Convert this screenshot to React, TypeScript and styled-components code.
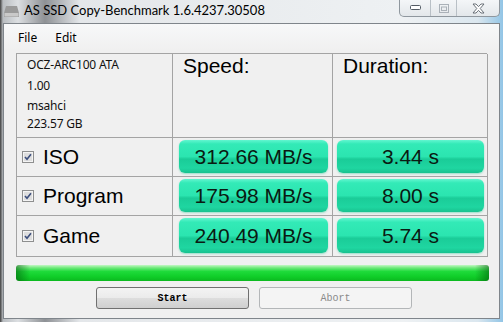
import React from "react";
import styled, { createGlobalStyle } from "styled-components";

const GlobalStyle = createGlobalStyle`
  html, body {
    margin: 0;
    padding: 0;
    width: 503px;
    height: 322px;
    overflow: hidden;
    background: #9cc8e6;
  }
`;

const Window = styled.div`
  width: 503px;
  height: 322px;
  display: flex;
  flex-direction: column;
  background: linear-gradient(90deg, #3e3e3e 0, #b9bdc1 3px, #dcdfe2 18px, #8e9195 45px, #e4e7ea 80px, #eef1f3 80%, #dbe7ef 95%, #92c5e6 100%);
  font-family: "Liberation Sans", Arial, sans-serif;
`;

const TitleBar = styled.div`
  height: 23px;
  display: flex;
  align-items: flex-start;
  flex-shrink: 0;
`;

const AppIcon = styled.svg`
  margin: 5px 0 0 4px;
`;

const TitleText = styled.div`
  margin: 1px 0 0 5px;
  font-family: Lato, "Noto Sans", sans-serif;
  font-size: 13px;
  line-height: 18px;
  color: #000;
`;

const Controls = styled.div`
  margin-left: auto;
  margin-right: 3px;
  display: flex;
  height: 16px;
  border: 1px solid #8f979e;
  border-top: none;
  border-radius: 0 0 5px 5px;
  background: linear-gradient(#f4f6f8, #e3e7ea);
  overflow: hidden;
`;

const CtrlButton = styled.div<{ $w: number; $last?: boolean }>`
  width: ${(p) => p.$w}px;
  display: flex;
  align-items: center;
  justify-content: center;
  border-right: ${(p) => (p.$last ? "none" : "1px solid #b9c0c6")};
`;

const Client = styled.div`
  flex: 1;
  margin: 0 3px 3px 3px;
  border: 1px solid #7f858b;
  background: #f0f0f0;
  display: flex;
  flex-direction: column;
`;

const MenuBar = styled.div`
  height: 26px;
  display: flex;
  align-items: center;
  padding-left: 5px;
  background: linear-gradient(#f7f8f9, #f0f0f0);
`;

const MenuItem = styled.span`
  padding: 0 9px;
  font-family: "Noto Sans", "Open Sans", sans-serif;
  font-size: 12px;
  color: #000;
`;

const Table = styled.div`
  margin: 3px 0 0 12px;
  width: 471px;
  display: grid;
  grid-template-columns: 156px 160px 155px;
  grid-template-rows: 84px 39px 39px 41px;
  border-top: 1px solid #a4a4a4;
  border-left: 1px solid #a4a4a4;
  box-sizing: border-box;
`;

const Cell = styled.div`
  border-right: 1px solid #a4a4a4;
  border-bottom: 1px solid #a4a4a4;
  box-sizing: border-box;
  display: flex;
  min-width: 0;
`;

const InfoCell = styled(Cell)`
  flex-direction: column;
  padding: 0 0 0 10px;
  font-family: "Noto Sans", "Open Sans", sans-serif;
  font-size: 12px;
  letter-spacing: -0.2px;
  color: #111;
`;

const InfoLine = styled.div<{ $h: number }>`
  height: ${(p) => p.$h}px;
  line-height: ${(p) => p.$h}px;
`;

const HeadCell = styled(Cell)`
  padding: 0 0 0 10px;
  font-size: 21px;
  line-height: 24px;
  color: #000;
`;

const LabelCell = styled(Cell)`
  align-items: center;
  padding-left: 5px;
  gap: 9px;
  font-size: 21px;
  color: #000;
`;

const BarCell = styled(Cell)<{ $pl: number; $pr: number }>`
  padding: 2px ${(p) => p.$pr}px 3px ${(p) => p.$pl}px;
`;

const ResultBar = styled.div`
  flex: 1;
  border-radius: 6px;
  display: flex;
  align-items: center;
  justify-content: center;
  font-size: 21px;
  color: #0a1a12;
  background: linear-gradient(#62f6d0 0%, #33eab7 12%, #2be5b0 50%, #1acc98 58%, #1fd6a1 85%, #18c28f 100%);
  box-shadow: 0 1px 2px rgba(40, 200, 150, 0.45);
`;

const Progress = styled.div`
  margin: 8px 0 0 12px;
  width: 473px;
  height: 16px;
  border-radius: 3px;
  background:
    linear-gradient(90deg, rgba(0, 90, 10, 0.55) 0, rgba(0, 90, 10, 0) 14px, rgba(0, 90, 10, 0) calc(100% - 14px), rgba(0, 90, 10, 0.55) 100%),
    linear-gradient(#c4f7c4 0%, #6ee97a 18%, #1fdb3b 40%, #10cf2a 70%, #0bb91f 100%);
`;

const ButtonRow = styled.div`
  display: flex;
  gap: 10px;
  margin: 6px 0 0 92px;
`;

const Button = styled.button<{ $disabled?: boolean }>`
  width: 153px;
  height: 22px;
  padding: 0;
  border-radius: 3px;
  font-family: "Liberation Mono", "DejaVu Sans Mono", monospace;
  font-size: 10px;
  font-weight: ${(p) => (p.$disabled ? 400 : 700)};
  border: 1px solid ${(p) => (p.$disabled ? "#b3b6b8" : "#707070")};
  color: ${(p) => (p.$disabled ? "#8a8a8a" : "#000")};
  background: ${(p) =>
    p.$disabled
      ? "#f4f4f4"
      : "linear-gradient(#f3f3f3 0%, #ebebeb 48%, #dddddd 52%, #cfcfcf 100%)"};
`;

function CheckBox() {
  return (
    <svg width="12" height="12" viewBox="0 0 12 12">
      <rect x="0.5" y="0.5" width="11" height="11" fill="#f4f4f4" stroke="#8e8f8f" />
      <rect x="2" y="2" width="8" height="8" fill="#dedede" />
      <path d="M3 6 L5 8.3 L9 3.2" fill="none" stroke="#3d4f7d" strokeWidth="1.6" />
    </svg>
  );
}

const rows = [
  { name: "ISO", speed: "312.66 MB/s", time: "3.44 s" },
  { name: "Program", speed: "175.98 MB/s", time: "8.00 s" },
  { name: "Game", speed: "240.49 MB/s", time: "5.74 s" },
];

export default function App() {
  return (
    <Window>
      <GlobalStyle />
      <TitleBar>
        <AppIcon width="15" height="12" viewBox="0 0 15 12">
          <path d="M2 1 H13 L15 8 V12 H0 V8 Z" fill="#9a9a9a" />
          <rect x="0.5" y="8" width="14" height="3.5" fill="#c9c9c9" />
        </AppIcon>
        <TitleText>AS SSD Copy-Benchmark 1.6.4237.30508</TitleText>
        <Controls>
          <CtrlButton $w={30}>
            <svg width="11" height="6" viewBox="0 0 11 6">
              <rect x="0.5" y="0.5" width="10" height="4" rx="1" fill="#fff" stroke="#535b64" />
            </svg>
          </CtrlButton>
          <CtrlButton $w={25}>
            <svg width="10" height="9" viewBox="0 0 10 9">
              <rect x="0.5" y="0.5" width="9" height="8" fill="none" stroke="#aab1b8" />
              <rect x="2.5" y="3" width="5" height="3.5" fill="none" stroke="#aab1b8" />
            </svg>
          </CtrlButton>
          <CtrlButton $w={42} $last>
            <svg width="13" height="11" viewBox="0 0 13 11">
              <path
                d="M1 1 H4 L6.5 3.6 L9 1 H12 L8.2 5.5 L12 10 H9 L6.5 7.4 L4 10 H1 L4.8 5.5 Z"
                fill="#fff"
                stroke="#5b636b"
                strokeWidth="0.9"
              />
            </svg>
          </CtrlButton>
        </Controls>
      </TitleBar>
      <Client>
        <MenuBar>
          <MenuItem>File</MenuItem>
          <MenuItem>Edit</MenuItem>
        </MenuBar>
        <Table>
          <InfoCell>
            <InfoLine $h={21}>OCZ-ARC100 ATA</InfoLine>
            <InfoLine $h={21}>1.00</InfoLine>
            <InfoLine $h={20}>msahci</InfoLine>
            <InfoLine $h={15}>223.57 GB</InfoLine>
          </InfoCell>
          <HeadCell>Speed:</HeadCell>
          <HeadCell>Duration:</HeadCell>
          {rows.map((r) => (
            <React.Fragment key={r.name}>
              <LabelCell>
                <CheckBox />
                {r.name}
              </LabelCell>
              <BarCell $pl={6} $pr={4}>
                <ResultBar>{r.speed}</ResultBar>
              </BarCell>
              <BarCell $pl={4} $pr={3}>
                <ResultBar>{r.time}</ResultBar>
              </BarCell>
            </React.Fragment>
          ))}
        </Table>
        <Progress />
        <ButtonRow>
          <Button>Start</Button>
          <Button $disabled>Abort</Button>
        </ButtonRow>
      </Client>
    </Window>
  );
}
